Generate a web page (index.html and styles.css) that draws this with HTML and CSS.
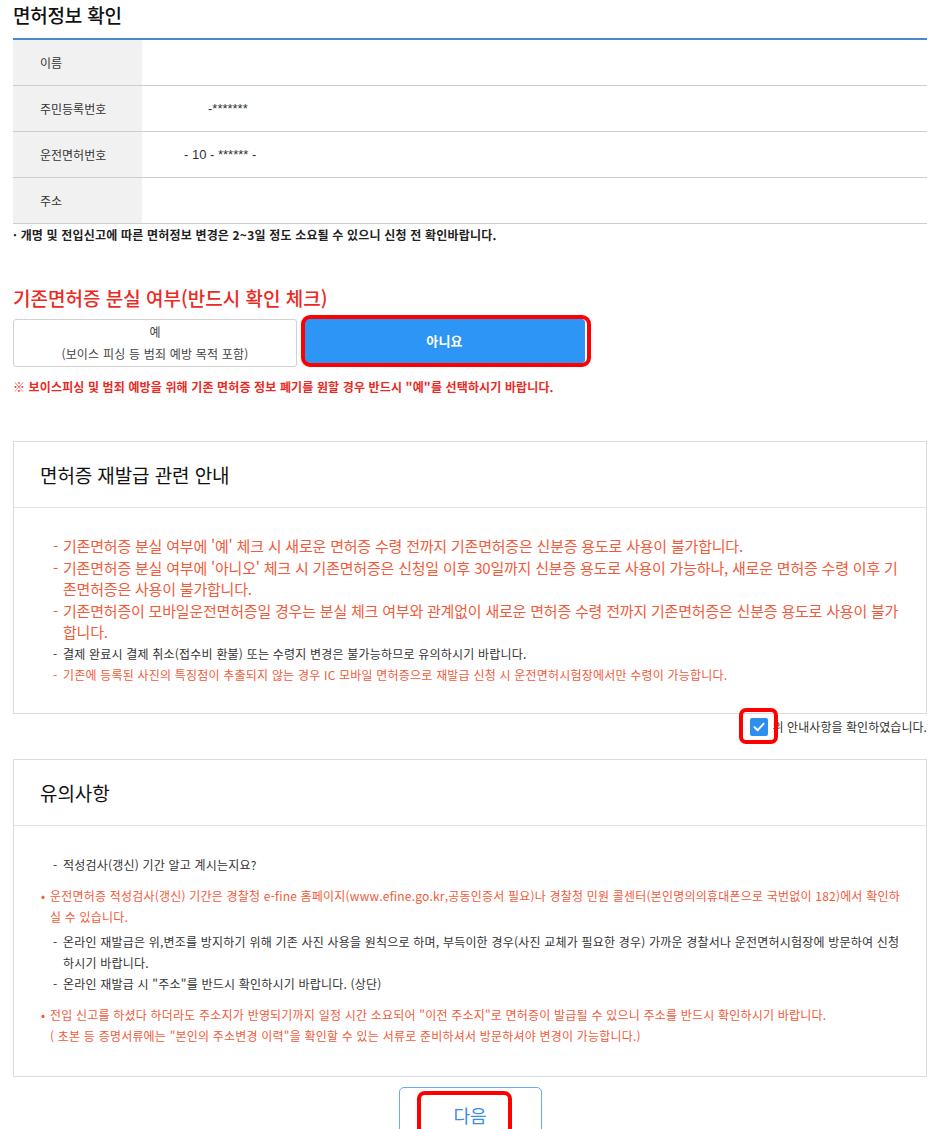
FILE: index.html
```html
<!DOCTYPE html>
<html lang="ko">
<head>
  <meta charset="UTF-8">
  <meta name="viewport" content="width=device-width, initial-scale=1.0">
  <title>면허정보 확인</title>
  <link rel="stylesheet" href="styles.css">
</head>
<body>
  <div class="page">
    <h2 class="page-title">면허정보 확인</h2>

    <div class="info-table">
      <div class="info-row"><div class="info-label">이름</div><div class="info-value"></div></div>
      <div class="info-row"><div class="info-label">주민등록번호</div><div class="info-value"><span class="rrn">-*******</span></div></div>
      <div class="info-row"><div class="info-label">운전면허번호</div><div class="info-value"><span class="lic">- 10 - ****** -</span></div></div>
      <div class="info-row"><div class="info-label">주소</div><div class="info-value"></div></div>
    </div>
    <p class="info-note">· 개명 및 전입신고에 따른 면허정보 변경은 2~3일 정도 소요될 수 있으니 신청 전 확인바랍니다.</p>

    <h3 class="lost-title">기존면허증 분실 여부(반드시 확인 체크)</h3>
    <div class="choice">
      <button class="choice-btn">예<br>(보이스 피싱 등 범죄 예방 목적 포함)</button>
      <button class="choice-btn is-on">아니요<span class="mark-box"></span></button>
    </div>
    <p class="lost-note">※ 보이스피싱 및 범죄 예방을 위해 기존 면허증 정보 폐기를 원할 경우 반드시 "예"를 선택하시기 바랍니다.</p>

    <!-- 재발급 안내 -->
    <section class="guide">
      <div class="guide-head">면허증 재발급 관련 안내</div>
      <ul class="guide-body">
        <li class="big red"><span class="mk">-</span><span>기존면허증 분실 여부에 '예' 체크 시 새로운 면허증 수령 전까지 기존면허증은 신분증 용도로 사용이 불가합니다.</span></li>
        <li class="big red"><span class="mk">-</span><span>기존면허증 분실 여부에 '아니오' 체크 시 기존면허증은 신청일 이후 30일까지 신분증 용도로 사용이 가능하나, 새로운 면허증 수령 이후 기존면허증은 사용이 불가합니다.</span></li>
        <li class="big red"><span class="mk">-</span><span>기존면허증이 모바일운전면허증일 경우는 분실 체크 여부와 관계없이 새로운 면허증 수령 전까지 기존면허증은 신분증 용도로 사용이 불가합니다.</span></li>
        <li><span class="mk">-</span><span>결제 완료시 결제 취소(접수비 환불) 또는 수령지 변경은 불가능하므로 유의하시기 바랍니다.</span></li>
        <li class="red"><span class="mk">-</span><span>기존에 등록된 사진의 특징점이 추출되지 않는 경우 IC 모바일 면허증으로 재발급 신청 시 운전면허시험장에서만 수령이 가능합니다.</span></li>
      </ul>
    </section>

    <div class="agree">
      <label class="agree-label">
        <span class="check">
          <svg width="18" height="18" viewBox="0 0 18 18"><path d="M4.5 9.2 L7.7 12.2 L13.5 5.8" fill="none" stroke="#fff" stroke-width="2" stroke-linecap="round" stroke-linejoin="round"/></svg>
          <span class="mark-box"></span>
        </span>
        위 안내사항을 확인하였습니다.
      </label>
    </div>

    <!-- 유의사항 -->
    <section class="guide">
      <div class="guide-head">유의사항</div>
      <ul class="guide-body notice">
        <li class="dash"><span class="mk">-</span><span>적성검사(갱신) 기간 알고 계시는지요?</span></li>
        <li class="dot red"><span class="mk">•</span><span>운전면허증 적성검사(갱신) 기간은 경찰청 e-fine 홈페이지(www.efine.go.kr,공동인증서 필요)나 경찰청 민원 콜센터(본인명의의휴대폰으로 국번없이 182)에서 확인하실 수 있습니다.</span></li>
        <li class="dash gap-s"><span class="mk">-</span><span>온라인 재발급은 위,변조를 방지하기 위해 기존 사진 사용을 원칙으로 하며, 부득이한 경우(사진 교체가 필요한 경우) 가까운 경찰서나 운전면허시험장에 방문하여 신청하시기 바랍니다.</span></li>
        <li class="dash"><span class="mk">-</span><span>온라인 재발급 시 "주소"를 반드시 확인하시기 바랍니다. (상단)</span></li>
        <li class="dot red"><span class="mk">•</span><span>전입 신고를 하셨다 하더라도 주소지가 반영되기까지 일정 시간 소요되어 "이전 주소지"로 면허증이 발급될 수 있으니 주소를 반드시 확인하시기 바랍니다.<br>( 초본 등 증명서류에는 "본인의 주소변경 이력"을 확인할 수 있는 서류로 준비하셔서 방문하셔야 변경이 가능합니다.)</span></li>
      </ul>
    </section>

    <div class="actions">
      <button class="next-btn">다음<span class="mark-box"></span></button>
    </div>
  </div>
</body>
</html>
```

FILE: styles.css
```css
body {
  margin: 0;
  padding: 0;
  background: #fff;
  color: #222;
  font-family: "Noto Sans CJK KR", "Noto Sans", sans-serif;
}
.page {
  padding: 0 4px 0 13px;
}
.page-title {
  margin: 0;
  padding-bottom: 8px;
  border-bottom: 2px solid #4a88d2;
  font-size: 19px;
  font-weight: 500;
  line-height: 30px;
  letter-spacing: -0.2px;
  color: #111;
}
.info-row {
  display: grid;
  grid-template-columns: 129px 1fr;
  height: 46px;
  box-sizing: border-box;
  border-bottom: 1px solid #cdcdcd;
}
.info-label {
  display: flex;
  align-items: center;
  padding-left: 27px;
  background: #f1f1f1;
  font-size: 12px;
  color: #333;
}
.info-value {
  display: flex;
  align-items: center;
  font-family: "Liberation Sans", Arial, sans-serif;
  font-size: 13px;
  color: #333;
}
.rrn {
  margin-left: 66px;
}
.lic {
  margin-left: 42px;
}
.info-note {
  margin: 1px 0 0;
  font-size: 12px;
  font-weight: bold;
  line-height: 20px;
  letter-spacing: 0.18px;
  color: #222;
}
.lost-title {
  margin: 40px 0 0;
  font-size: 19px;
  font-weight: 500;
  line-height: 26px;
  color: #ec2a23;
}
.choice {
  display: flex;
  align-items: flex-start;
  gap: 7px;
  margin-top: 8px;
}
.choice-btn {
  position: relative;
  width: 284px;
  height: 48px;
  padding: 0;
  border: 1px solid #d2d2d2;
  border-radius: 3px;
  background: #fff;
  font-family: inherit;
  font-size: 12px;
  line-height: 22px;
  letter-spacing: 0.2px;
  color: #444;
}
.choice-btn.is-on {
  width: 281px;
  height: 44px;
  border-color: #2c95f6;
  background: #2c95f6;
  color: #fff;
  font-size: 13px;
  font-weight: bold;
}
.mark-box {
  position: absolute;
  inset: -5px;
  border: 4px solid #f00;
  border-radius: 9px;
  pointer-events: none;
}
.choice-btn.is-on .mark-box {
  inset: -5px -7px -5px -4px;
}
.lost-note {
  margin: 10px 0 0;
  font-size: 12px;
  font-weight: bold;
  line-height: 20px;
  letter-spacing: 0.13px;
  color: #ea2a1f;
}
.guide {
  margin-top: 44px;
  border: 1px solid #dcdcdc;
}
.guide-head {
  padding: 20px 26px 19px;
  border-bottom: 1px solid #e2e2e2;
  font-size: 19px;
  line-height: 26px;
  letter-spacing: -0.1px;
  color: #111;
}
.guide-body {
  margin: 0;
  padding: 27px 26px 27px 39px;
  list-style: none;
}
.guide-body li {
  display: flex;
  font-size: 12px;
  line-height: 21.5px;
  letter-spacing: 0.2px;
  color: #333;
}
.guide-body .mk {
  flex: 0 0 10px;
}
.guide-body li.big {
  font-size: 15px;
  letter-spacing: -0.2px;
}
.guide-body li.red {
  color: #f25a3a;
}
.guide-body.notice {
  padding: 28px 26px 30px 27px;
}
.notice li {
  line-height: 21px;
}
.notice li.dash {
  margin-left: 12px;
}
.notice li.dot {
  margin-top: 9px;
}
.notice li.dash + li.dot {
  margin-top: 10px;
}
.notice li.dot .mk {
  flex-basis: 9px;
}
.notice li.gap-s {
  margin-top: 4px;
}
.agree {
  display: flex;
  justify-content: flex-end;
  align-items: flex-start;
  box-sizing: border-box;
  height: 45px;
  padding-top: 4px;
}
.agree-label {
  display: flex;
  align-items: center;
  gap: 5px;
  height: 18px;
  font-size: 12px;
  letter-spacing: 0.05px;
  color: #333;
}
.check {
  position: relative;
  width: 18px;
  height: 18px;
  border-radius: 2px;
  background: #2e8ff0;
}
.check svg {
  display: block;
}
.check .mark-box {
  inset: -10px -10px -8px -11px;
  border-radius: 7px;
}
.guide + .agree + .guide {
  margin-top: 0;
}
.actions {
  display: flex;
  justify-content: center;
  margin-top: 10px;
}
.next-btn {
  position: relative;
  width: 143px;
  height: 56px;
  border: 1px solid #68acf4;
  border-radius: 5px;
  background: #fff;
  font-family: inherit;
  font-size: 18px;
  color: #3b8ee8;
}
.next-btn .mark-box {
  inset: 3px 29px 3px 17px;
  border-radius: 8px;
}
```
